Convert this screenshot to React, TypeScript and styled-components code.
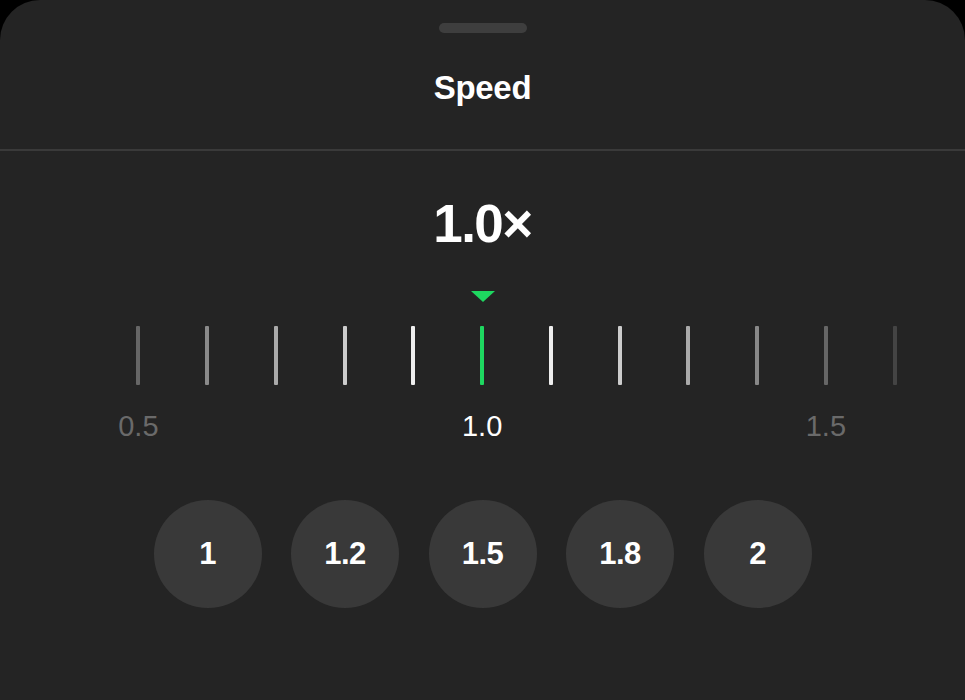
import React from "react";
import styled, { createGlobalStyle } from "styled-components";

const Global = createGlobalStyle`
  html, body { margin: 0; padding: 0; background: #000; }
  body { font-family: "Liberation Sans", Arial, sans-serif; }
`;

const Sheet = styled.div`
  width: 965px;
  height: 700px;
  background: #242424;
  border-radius: 40px 40px 0 0;
  overflow: hidden;
  display: flex;
  flex-direction: column;
  align-items: center;
  color: #fff;
`;

const Header = styled.div`
  width: 100%;
  height: 149px;
  border-bottom: 2px solid #3a3a3a;
  display: flex;
  flex-direction: column;
  align-items: center;
`;

const Handle = styled.div`
  margin-top: 23px;
  width: 88px;
  height: 10px;
  border-radius: 5px;
  background: #3e3e3e;
`;

const Title = styled.h1`
  margin: 35px 0 0;
  font-size: 33px;
  line-height: 40px;
  font-weight: 700;
  letter-spacing: -0.3px;
`;

const Value = styled.div`
  margin-top: 43px;
  font-size: 53px;
  line-height: 60px;
  font-weight: 700;
  letter-spacing: -1.5px;
`;

const Pointer = styled.div`
  margin-top: 37px;
  width: 0;
  height: 0;
  border-left: 12px solid transparent;
  border-right: 12px solid transparent;
  border-top: 11px solid #1ed760;
`;

const Scale = styled.div`
  align-self: flex-start;
  margin-left: 104px;
  display: grid;
  grid-template-columns: repeat(12, 68.75px);
`;

const TickRow = styled(Scale)`
  margin-top: 24px;
  height: 59px;
`;

const TickCell = styled.div`
  display: flex;
  justify-content: center;
`;

const Tick = styled.div<{ $color: string }>`
  width: 4px;
  height: 59px;
  border-radius: 1px;
  background: ${(p) => p.$color};
`;

const LabelRow = styled(Scale)`
  margin-top: 26px;
`;

const Label = styled.div<{ $col: number; $active?: boolean }>`
  grid-column: ${(p) => p.$col};
  text-align: center;
  font-size: 29px;
  line-height: 30px;
  font-weight: 400;
  color: ${(p) => (p.$active ? "#ffffff" : "#6a6a6a")};
`;

const Presets = styled.div`
  margin-top: 59px;
  display: flex;
  gap: 29.5px;
`;

const Preset = styled.button`
  width: 108px;
  height: 108px;
  border-radius: 50%;
  border: none;
  background: #393939;
  color: #fff;
  font-family: "Liberation Sans", Arial, sans-serif;
  font-size: 31px;
  font-weight: 700;
  letter-spacing: -0.5px;
  display: flex;
  align-items: center;
  justify-content: center;
  padding: 0;
`;

const tickColors = [
  "#666666",
  "#8a8a8a",
  "#aaaaaa",
  "#cccccc",
  "#eeeeee",
  "#1ed760",
  "#eeeeee",
  "#cccccc",
  "#aaaaaa",
  "#888888",
  "#666666",
  "#444444",
];

const presets = ["1", "1.2", "1.5", "1.8", "2"];

export default function App() {
  return (
    <>
      <Global />
      <Sheet>
        <Header>
          <Handle />
          <Title>Speed</Title>
        </Header>
        <Value>1.0×</Value>
        <Pointer />
        <TickRow>
          {tickColors.map((c, i) => (
            <TickCell key={i}>
              <Tick $color={c} />
            </TickCell>
          ))}
        </TickRow>
        <LabelRow>
          <Label $col={1}>0.5</Label>
          <Label $col={6} $active>
            1.0
          </Label>
          <Label $col={11}>1.5</Label>
        </LabelRow>
        <Presets>
          {presets.map((p) => (
            <Preset key={p}>{p}</Preset>
          ))}
        </Presets>
      </Sheet>
    </>
  );
}
